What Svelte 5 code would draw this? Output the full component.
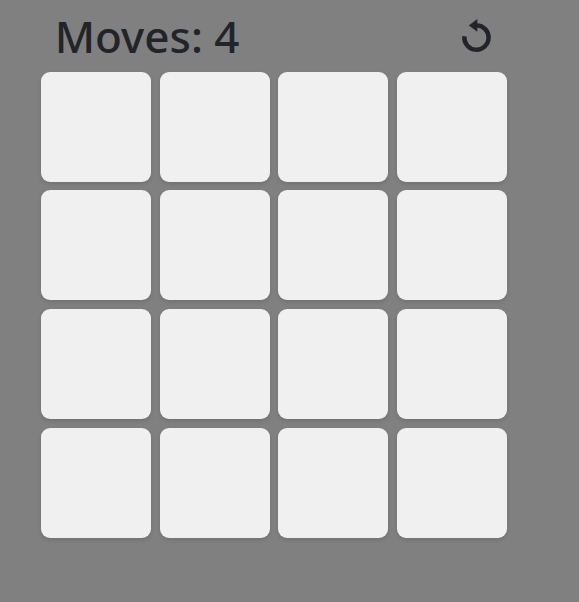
<script>
  let moves = $state(4);
  const cards = Array.from({ length: 16 }, (_, i) => i);
</script>

<main>
  <header>
    <h1>Moves: {moves}</h1>
    <button class="reset" aria-label="Restart" onclick={() => (moves = 0)}>
      <svg viewBox="0 0 36 36" width="36" height="36">
        <path d="M6.4 18.2A12.15 12.15 0 1 0 18.5 7.4" fill="none" stroke="#212529" stroke-width="4.4" />
        <path d="M10.8 7.4L19.3 1.1V13.8Z" fill="#212529" />
      </svg>
    </button>
  </header>
  <div class="board">
    {#each cards as card (card)}
      <button class="card" aria-label="Card {card + 1}"></button>
    {/each}
  </div>
</main>

<style>
  :global(body) {
    margin: 0;
    background: #808080;
  }
  main {
    box-sizing: border-box;
    width: 579px;
    height: 602px;
    padding-left: 41px;
    overflow: hidden;
    background: #808080;
    font-family: "Noto Sans", sans-serif;
    color: #212529;
  }
  header {
    box-sizing: border-box;
    width: 466px;
    height: 71.75px;
    padding: 9px 13px 8.75px 13.7px;
    display: flex;
    justify-content: space-between;
    align-items: center;
  }
  h1 {
    margin: 0;
    font-size: 44px;
    line-height: 54px;
    font-weight: 500;
  }
  button {
    border: 0;
    padding: 0;
  }
  .reset {
    display: flex;
    background: none;
    color: inherit;
  }
  .board {
    display: grid;
    grid-template-columns: repeat(4, 110px);
    grid-auto-rows: 110px;
    gap: 8.67px;
  }
  .card {
    border-radius: 9px;
    background: #f0f0f0;
    box-shadow: 0 2px 4px rgba(0, 0, 0, 0.12);
  }
</style>
